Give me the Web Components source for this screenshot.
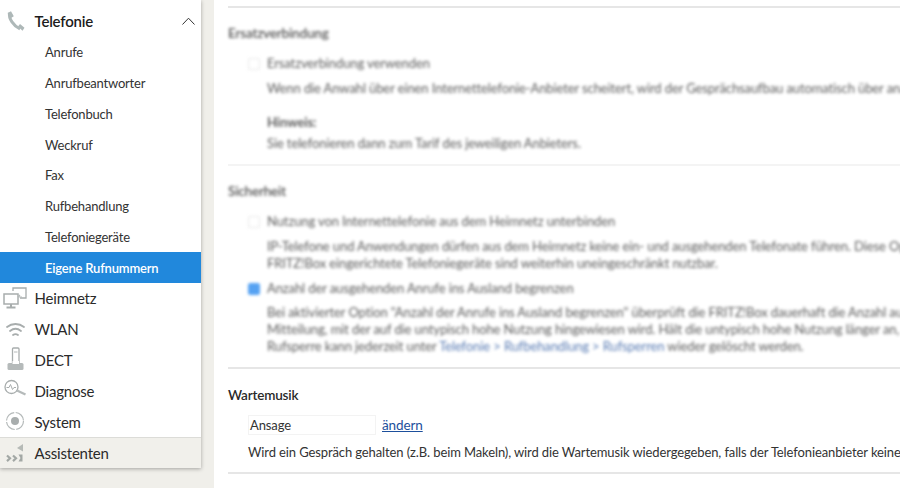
<!DOCTYPE html>
<html lang="de">
<head>
<meta charset="utf-8">
<title>FRITZ!Box</title>
<style>
  html, body { margin: 0; height: 488px; overflow: hidden; background: #f0efea; }
  body { font-family: Lato, "Noto Sans", sans-serif; color: #2b2b2b; }
  a { color: #2f5aa0; }
</style>
</head>
<body>
<fritz-app>
  <fritz-nav slot="nav">
    <nav-group label="Telefonie" icon="phone" open></nav-group>
    <nav-sub>Anrufe</nav-sub>
    <nav-sub>Anrufbeantworter</nav-sub>
    <nav-sub>Telefonbuch</nav-sub>
    <nav-sub>Weckruf</nav-sub>
    <nav-sub>Fax</nav-sub>
    <nav-sub>Rufbehandlung</nav-sub>
    <nav-sub>Telefoniegeräte</nav-sub>
    <nav-sub active>Eigene Rufnummern</nav-sub>
    <nav-group label="Heimnetz" icon="net"></nav-group>
    <nav-group label="WLAN" icon="wlan"></nav-group>
    <nav-group label="DECT" icon="dect"></nav-group>
    <nav-group label="Diagnose" icon="diag"></nav-group>
    <nav-group label="System" icon="sys"></nav-group>
    <nav-group label="Assistenten" icon="assist" footer></nav-group>
  </fritz-nav>

  <fritz-section title="Ersatzverbindung" blurred>
    <check-row>Ersatzverbindung verwenden</check-row>
    <p class="first">Wenn die Anwahl über einen Internettelefonie-Anbieter scheitert, wird der Gesprächsaufbau automatisch über analog</p>
    <p class="hint"><b>Hinweis:</b></p>
    <p class="tight">Sie telefonieren dann zum Tarif des jeweiligen Anbieters.</p>
  </fritz-section>

  <fritz-section title="Sicherheit" blurred faint>
    <check-row>Nutzung von Internettelefonie aus dem Heimnetz unterbinden</check-row>
    <p class="first">IP-Telefone und Anwendungen dürfen aus dem Heimnetz keine ein- und ausgehenden Telefonate führen. Diese Option</p>
    <p>FRITZ!Box eingerichtete Telefoniegeräte sind weiterhin uneingeschränkt nutzbar.</p>
    <check-row checked class="next">Anzahl der ausgehenden Anrufe ins Ausland begrenzen</check-row>
    <p class="second">Bei aktivierter Option "Anzahl der Anrufe ins Ausland begrenzen" überprüft die FRITZ!Box dauerhaft die Anzahl aus</p>
    <p>Mitteilung, mit der auf die untypisch hohe Nutzung hingewiesen wird. Hält die untypisch hohe Nutzung länger an, wird</p>
    <p>Rufsperre kann jederzeit unter <a>Telefonie &gt; Rufbehandlung &gt; Rufsperren</a> wieder gelöscht werden.</p>
  </fritz-section>

  <fritz-section title="Wartemusik" last>
    <music-row value="Ansage" action="ändern"></music-row>
    <p class="music">Wird ein Gespräch gehalten (z.B. beim Makeln), wird die Wartemusik wiedergegeben, falls der Telefonieanbieter keine</p>
  </fritz-section>
</fritz-app>

<script>
const ICONS = {
  phone: '<path d="M6.500 4C5.500 9.500 10.500 17 17 20" fill="none" stroke="#aeb8b8" stroke-width="3"/><path d="M4.500 4 8 2.200l2.800 5-2.800 1.800zM15 17.500l2-2.500 4.500 3.800-2 3z" fill="#aeb8b8"/>',
  net: '<rect x="1" y="8" width="14" height="10" fill="#fff" stroke="#a8adad" stroke-width="1.500"/><path d="M8 18v2.500M3.500 21.500h9" stroke="#a8adad" stroke-width="2"/><path d="M10 5V2h13v10h-6" fill="none" stroke="#a8adad" stroke-width="1.300"/><path d="M15 11h4M15 11l2-2" stroke="#b5baba" stroke-width="1.200"/>',
  wlan: '<g fill="none" stroke="#a8adad" stroke-width="1.800" stroke-linecap="round"><path d="M4 10c5-4 12-4 17 0"/><path d="M7 14c3.500-2.800 7.500-2.800 11 0"/><path d="M10 18c1.800-1.300 3.200-1.300 5 0"/></g>',
  dect: '<rect x="9.500" y="1" width="6.500" height="17" rx="1" fill="#fff" stroke="#a8adad" stroke-width="1.300"/><path d="M11 5h3.500" stroke="#b5baba"/><rect x="4.500" y="16" width="16" height="7" rx="1.500" fill="#b5baba"/><rect x="9.500" y="14" width="6.500" height="3" fill="#fff"/>',
  diag: '<circle cx="8.500" cy="9" r="6.500" fill="none" stroke="#a8adad" stroke-width="1.300"/><path d="M3.500 9.500h2.500l1.500-3 2 5 1.500-2h2" fill="none" stroke="#a8adad" stroke-width="1"/><path d="M14 12.500l8.500 4" stroke="#b5baba" stroke-width="2.400"/>',
  sys: '<circle cx="12" cy="12" r="8.500" fill="none" stroke="#b5baba" stroke-width="1.200" stroke-dasharray="12 1.500"/><circle cx="12" cy="12" r="4" fill="#a8adad"/>',
  assist: '<g fill="none" stroke="#a3a8a5" stroke-width="2.200"><path d="M4 15.500l3 2.800-3 2.800M10 15.500l3 2.800-3 2.800"/></g><path d="M15.500 14.500h4v7h-4l2-3.500z" fill="#a3a8a5"/><path d="M20 4v7.500l-6-3.500z" fill="#b6bab6"/>'
};

class FritzApp extends HTMLElement {
  constructor() {
    super();
    this.attachShadow({ mode: 'open' });
    this.shadowRoot.innerHTML = `
      <style>
        :host { display: grid; grid-template-columns: 201px 13px 686px; height: 488px; overflow: hidden; }
        main { grid-column: 3; background: #fff; padding: 6px 0 0 14px; overflow: hidden; height: 482px; }
      </style>
      <slot name="nav"></slot>
      <main><slot></slot></main>
    `;
  }
}
customElements.define('fritz-app', FritzApp);

class FritzNav extends HTMLElement {
  constructor() {
    super();
    this.attachShadow({ mode: 'open' });
    this.shadowRoot.innerHTML = `
      <style>
        :host {
          display: flex; flex-direction: column; align-self: start;
          background: #fff; padding-top: 5px; width: 201px;
          box-shadow: 0 1px 4px rgba(0, 0, 0, 0.32);
        }
      </style>
      <slot></slot>
    `;
  }
}
customElements.define('fritz-nav', FritzNav);

class NavGroup extends HTMLElement {
  constructor() {
    super();
    this.attachShadow({ mode: 'open' });
  }
  connectedCallback() {
    const open = this.hasAttribute('open');
    this.shadowRoot.innerHTML = `
      <style>
        :host { display: flex; align-items: center; height: 30.800px; font-size: 15px; letter-spacing: -0.2px; color: #2a2a2a; }
        :host([footer]) { background: #f1f0eb; border-top: 1px solid #dcdcd8; height: 30px; }
        :host([open]) { height: 32px; font-weight: 600; color: #1c1c1c; }
        .ic { width: 25px; height: 25px; margin-left: 3px; flex: none; display: block; }
        .label { margin-left: 6.500px; flex: 1; }
        .chev { margin-right: 6px; width: 13px; height: 8px; display: block; }
      </style>
      <svg class="ic" viewBox="0 0 25 25">${ICONS[this.getAttribute('icon')] || ''}</svg>
      <span class="label">${this.getAttribute('label')}</span>
      ${open ? '<svg class="chev" viewBox="0 0 13 8"><path d="M.5 7.500 6.500 1.200l6 6.300" fill="none" stroke="#333" stroke-width="1"/></svg>' : ''}
    `;
  }
}
customElements.define('nav-group', NavGroup);

class NavSub extends HTMLElement {
  constructor() {
    super();
    this.attachShadow({ mode: 'open' });
    this.shadowRoot.innerHTML = `
      <style>
        :host { display: flex; align-items: center; height: 30.750px; padding-left: 45px; font-size: 13px; letter-spacing: -0.2px; color: #333; }
        :host([active]) { background: #2188dc; color: #fff; font-weight: 600; }
      </style>
      <slot></slot>
    `;
  }
}
customElements.define('nav-sub', NavSub);

class FritzSection extends HTMLElement {
  constructor() {
    super();
    this.attachShadow({ mode: 'open' });
  }
  connectedCallback() {
    const blurred = this.hasAttribute('blurred');
    const last = this.hasAttribute('last');
    this.shadowRoot.innerHTML = `
      <style>
        :host { display: block; border-top: 2px solid #e6e6e6; width: 900px; font-size: 13px; letter-spacing: -0.11px; line-height: 17px; color: #333; }
        :host([faint]) { border-top-color: #f4f4f4; }
        :host([last]) { border-bottom: 2px solid #e6e6e6; }
        :host([blurred]) ::slotted(p) { padding-left: 19px; }
        .body { padding: ${last ? 18 : 17}px 0 ${last ? 11 : 12}px; ${blurred ? 'filter: blur(1.700px); opacity: .8;' : ''} }
        h2 { font-size: 13.500px; letter-spacing: -0.19px; line-height: 17px; font-weight: 600; margin: 0 0 ${last ? 11 : 13}px; color: #2a2a2a; }
        .inner { padding-left: 20px; }
        ::slotted(p) { margin: 0; white-space: nowrap; }
        ::slotted(p.first) { margin-top: 8px; }
        ::slotted(p.second) { margin-top: 7px; }
        ::slotted(p.hint) { margin-top: 17px; }
        ::slotted(p.tight) { margin-top: 4px; }
        ::slotted(check-row.next) { margin-top: 8px; }
        ::slotted(p.music) { margin-top: 9px; }
      </style>
      <div class="body">
        <h2>${this.getAttribute('title')}</h2>
        <div class="inner"><slot></slot></div>
      </div>
    `;
  }
}
customElements.define('fritz-section', FritzSection);

class CheckRow extends HTMLElement {
  constructor() {
    super();
    this.attachShadow({ mode: 'open' });
    const on = this.hasAttribute('checked');
    this.shadowRoot.innerHTML = `
      <style>
        :host { display: flex; align-items: center; gap: 7px; white-space: nowrap; }
        .box { width: 12px; height: 12px; box-sizing: border-box; border-radius: 2px; flex: none; border: 1px solid #e2e2e2; background: #fff; }
        .box.on { background: #2d8cf0; border-color: #2d8cf0; }
      </style>
      <span class="box ${on ? 'on' : ''}"></span><span><slot></slot></span>
    `;
  }
}
customElements.define('check-row', CheckRow);

class MusicRow extends HTMLElement {
  constructor() {
    super();
    this.attachShadow({ mode: 'open' });
  }
  connectedCallback() {
    this.shadowRoot.innerHTML = `
      <style>
        :host { display: flex; align-items: center; gap: 6px; }
        .val { width: 125px; height: 18px; line-height: 18px; padding-left: 1px; border: 1px solid #f3f3f3; }
        a { color: #1d4f9c; text-decoration: underline; font-size: 13.500px; }
      </style>
      <span class="val">${this.getAttribute('value')}</span>
      <a href="#">${this.getAttribute('action')}</a>
    `;
  }
}
customElements.define('music-row', MusicRow);
</script>
</body>
</html>
